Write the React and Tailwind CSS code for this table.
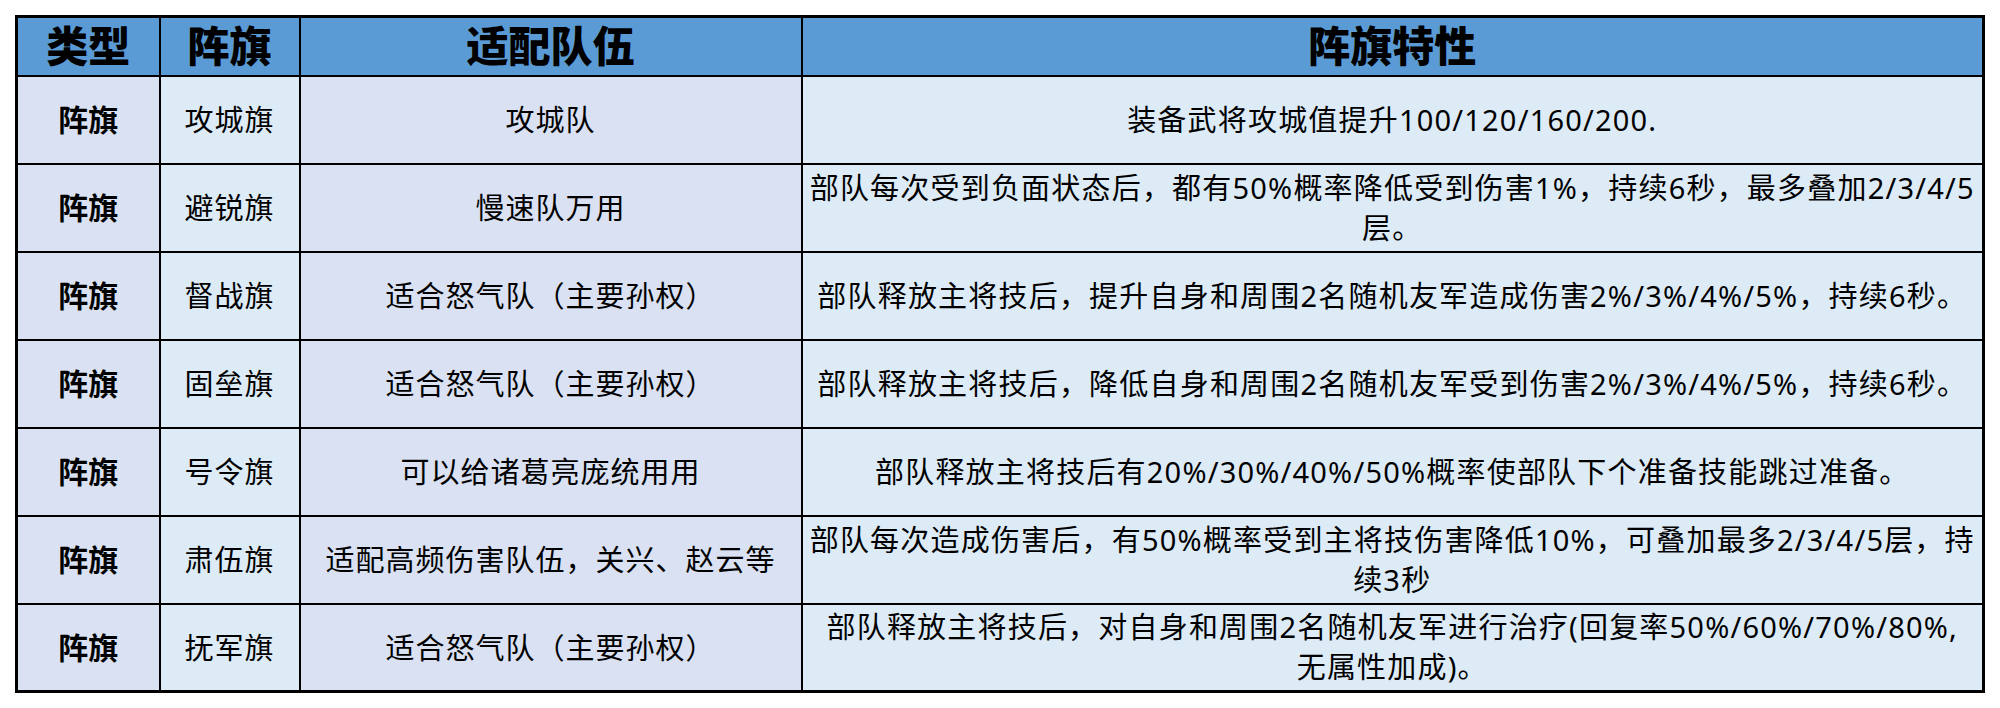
const rows = [
  {
    name: "攻城旗",
    team: "攻城队",
    desc: ["装备武将攻城值提升100/120/160/200."],
  },
  {
    name: "避锐旗",
    team: "慢速队万用",
    desc: [
      "部队每次受到负面状态后，都有50%概率降低受到伤害1%，持续6秒，最多叠加2/3/4/5",
      "层。",
    ],
  },
  {
    name: "督战旗",
    team: "适合怒气队（主要孙权）",
    desc: ["部队释放主将技后，提升自身和周围2名随机友军造成伤害2%/3%/4%/5%，持续6秒。"],
  },
  {
    name: "固垒旗",
    team: "适合怒气队（主要孙权）",
    desc: ["部队释放主将技后，降低自身和周围2名随机友军受到伤害2%/3%/4%/5%，持续6秒。"],
  },
  {
    name: "号令旗",
    team: "可以给诸葛亮庞统用用",
    desc: ["部队释放主将技后有20%/30%/40%/50%概率使部队下个准备技能跳过准备。"],
  },
  {
    name: "肃伍旗",
    team: "适配高频伤害队伍，关兴、赵云等",
    desc: [
      "部队每次造成伤害后，有50%概率受到主将技伤害降低10%，可叠加最多2/3/4/5层，持",
      "续3秒",
    ],
  },
  {
    name: "抚军旗",
    team: "适合怒气队（主要孙权）",
    desc: [
      "部队释放主将技后，对自身和周围2名随机友军进行治疗(回复率50%/60%/70%/80%,",
      "无属性加成)。",
    ],
  },
];

export default function App() {
  return (
    <div className="w-[2000px] h-[708px] bg-white pt-[15px] pl-[15px] font-['Noto_Sans','Noto_Sans_CJK_SC',sans-serif] text-black">
      <table className="table-fixed border-collapse border-[3px] border-black">
        <colgroup>
          <col className="w-[143px]" />
          <col className="w-[140px]" />
          <col className="w-[502px]" />
          <col className="w-[1182px]" />
        </colgroup>
        <thead>
          <tr className="h-[59px] bg-[#5b9bd5]">
            {["类型", "阵旗", "适配队伍", "阵旗特性"].map((h) => (
              <th
                key={h}
                className="border-2 border-black text-[42px] font-black leading-none text-center"
              >
                {h}
              </th>
            ))}
          </tr>
        </thead>
        <tbody>
          {rows.map((r) => (
            <tr key={r.name} className="h-[88px]">
              <td className="border-2 border-black bg-[#d9e1f2] text-center text-[30px] font-bold">
                阵旗
              </td>
              <td className="border-2 border-black bg-[#ddebf7] text-center text-[29px] tracking-[1px]">
                {r.name}
              </td>
              <td className="border-2 border-black bg-[#d9e1f2] text-center text-[29px] tracking-[1px] whitespace-nowrap">
                {r.team}
              </td>
              <td className="border-2 border-black bg-[#ddebf7] text-center text-[29px] tracking-[1.2px] leading-[40px]">
                {r.desc.map((line, i) => (
                  <div key={i} className="whitespace-nowrap">
                    {line}
                  </div>
                ))}
              </td>
            </tr>
          ))}
        </tbody>
      </table>
    </div>
  );
}
